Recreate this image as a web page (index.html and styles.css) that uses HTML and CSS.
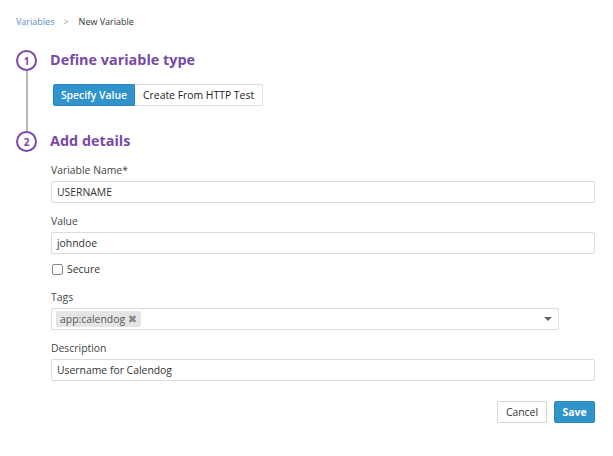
FILE: index.html
```html
<!DOCTYPE html>
<html>
<head>
<meta charset="utf-8">
<link rel="stylesheet" href="styles.css">
</head>
<body>
<nav class="crumbs">
  <a class="crumb-link">Variables</a>
  <span class="crumb-sep">&gt;</span>
  <span class="crumb-cur">New Variable</span>
</nav>
<div class="steps">
  <section class="step step-first">
    <div class="marker">
      <div class="circle">1</div>
      <div class="line"></div>
    </div>
    <div class="content">
      <h2 class="step-title">Define variable type</h2>
      <div class="seg">
        <button class="seg-btn seg-active">Specify Value</button>
        <button class="seg-btn">Create From HTTP Test</button>
      </div>
    </div>
  </section>
  <section class="step">
    <div class="marker">
      <div class="circle">2</div>
    </div>
    <div class="content">
      <h2 class="step-title">Add details</h2>
      <div class="field">
        <label class="label">Variable Name*</label>
        <div class="input">USERNAME</div>
      </div>
      <div class="field">
        <label class="label">Value</label>
        <div class="input">johndoe</div>
      </div>
      <div class="check-row">
        <span class="checkbox"></span>
        <span class="check-label">Secure</span>
      </div>
      <div class="field">
        <label class="label">Tags</label>
        <div class="input select">
          <span class="tag">app:calendog <span class="tag-x">✖</span></span>
          <span class="caret"></span>
        </div>
      </div>
      <div class="field">
        <label class="label">Description</label>
        <div class="input">Username for Calendog</div>
      </div>
      <div class="actions">
        <button class="btn btn-cancel">Cancel</button>
        <button class="btn btn-save">Save</button>
      </div>
    </div>
  </section>
</div>
</body>
</html>
```
FILE: styles.css
```css
* { box-sizing: border-box; }
body {
  margin: 0;
  font-family: "Open Sans", "DejaVu Sans", sans-serif;
  color: #333;
  background: #fff;
  width: 613px;
  height: 456px;
  overflow: hidden;
}
.crumbs {
  padding: 15px 0 0 16px;
  height: 50px;
  font-size: 9px;
  line-height: 14px;
  display: flex;
}
.crumb-link { color: #5b8ec2; }
.crumb-sep { color: #999; margin: 0 10px 0 9px; font-size: 9px; }
.crumb-cur { color: #333; }
.steps { padding-left: 16px; padding-right: 18px; }
.step { display: flex; }
.marker {
  width: 34px;
  flex: none;
  display: flex;
  flex-direction: column;
  align-items: flex-start;
}
.circle {
  width: 21px;
  height: 21px;
  border: 2px solid #7a49ab;
  border-radius: 50%;
  color: #7a49ab;
  font-size: 10px;
  font-weight: 700;
  display: flex;
  align-items: center;
  justify-content: center;
  line-height: 1;
}
.line {
  width: 2px;
  background: #b8b8b8;
  flex: 1;
  margin-left: 9.5px;
}
.content { flex: 1; }
.step-first .content { padding-bottom: 25px; }
.step-title {
  margin: 0;
  font-size: 14.4px;
  line-height: 20px;
  font-weight: 700;
  color: #774aa4;
}
.seg {
  display: flex;
  margin-top: 14px;
  margin-left: 3px;
}
.seg-btn {
  font-family: inherit;
  font-size: 10.4px;
  height: 22px;
  padding: 0 8px;
  border: 1px solid #ddd;
  background: #fff;
  color: #222;
  border-radius: 0 2px 2px 0;
  border-left: none;
}
.seg-active {
  background: #2f94cc;
  border: 1px solid #2a88bc;
  color: #fff;
  border-radius: 2px 0 0 2px;
  font-weight: 600;
  width: 82px;
  padding: 0;
}
.field { margin-top: 12px; }
.field + .field { margin-top: 11px; }
.label {
  display: block;
  font-size: 10.4px;
  line-height: 14px;
  color: #444;
  margin-left: 1px;
}
.input {
  margin-top: 4px;
  margin-left: 1px;
  height: 22px;
  border: 1px solid #dcdcdc;
  border-radius: 2px;
  font-size: 10.4px;
  line-height: 20px;
  padding-left: 5px;
  color: #333;
}
.check-row {
  display: flex;
  align-items: center;
  margin-top: 8px;
  margin-left: 2px;
  height: 14px;
}
.checkbox {
  width: 11px;
  height: 11px;
  border: 1px solid #888;
  border-radius: 2px;
  background: #fff;
}
.check-label { font-size: 10.4px; margin-left: 4px; color: #333; }
.check-row + .field { margin-top: 14px; }
.select {
  width: 508px;
  display: flex;
  align-items: center;
  justify-content: space-between;
  padding-left: 4px;
  padding-right: 6px;
}
.tag {
  background: #e5e5e5;
  border-radius: 2px;
  height: 16px;
  line-height: 16px;
  padding: 0 4px 0 4px;
  color: #555;
  font-size: 10.4px;
}
.tag-x { color: #888; font-size: 11px; }
.caret {
  width: 0;
  height: 0;
  border-left: 4px solid transparent;
  border-right: 4px solid transparent;
  border-top: 4px solid #666;
}
.actions {
  display: flex;
  justify-content: flex-end;
  gap: 7px;
  margin-top: 20px;
}
.btn {
  font-family: inherit;
  font-size: 10.4px;
  height: 22px;
  border-radius: 2px;
  padding: 0;
}
.btn-cancel {
  background: #fff;
  border: 1px solid #d4d4d4;
  color: #333;
  width: 50px;
}
.btn-save {
  background: #2f94cc;
  border: 1px solid #2a88bc;
  color: #fff;
  font-weight: 700;
  width: 41px;
}
```
